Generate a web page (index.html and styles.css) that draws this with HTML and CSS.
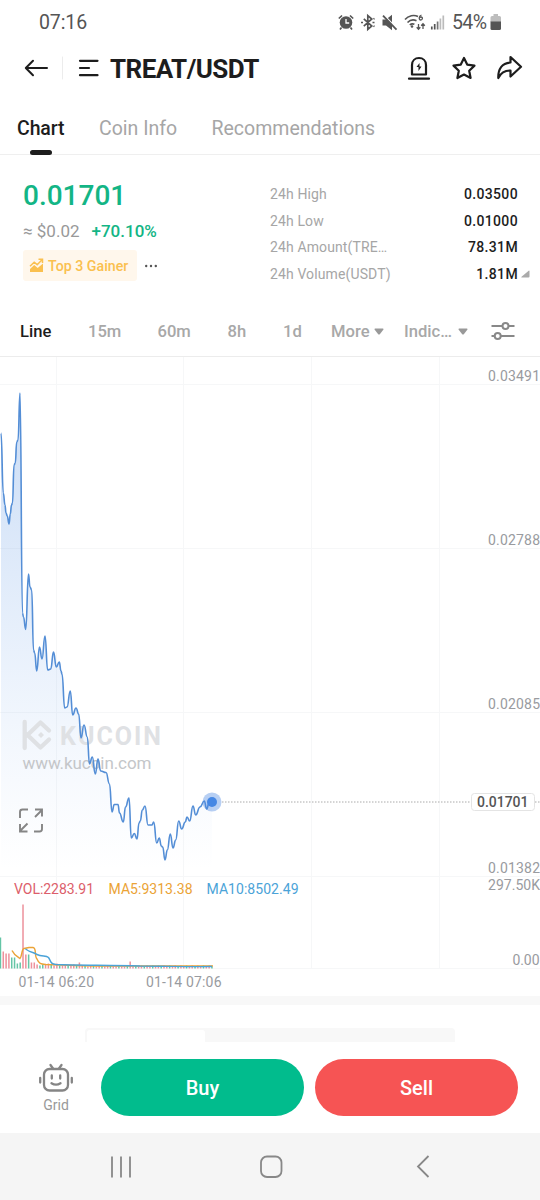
FILE: index.html
```html
<!DOCTYPE html>
<html lang="en">
<head>
<meta charset="utf-8">
<title>TREAT/USDT</title>
<link rel="stylesheet" href="styles.css">
</head>
<body>
<div class="status">
  <span class="clock">07:16</span>
  <svg class="status-icons" width="112" height="24" viewBox="336 10 112 24" fill="none" stroke="#555" stroke-width="1.700">
    <circle cx="346" cy="22.500" r="6.300" fill="#555" stroke="none"/>
    <path d="M338.800 18.500l3.200-3M353.200 18.500l-3.200-3M341.500 27.500l-1.500 2M350.500 27.500l1.500 2"/>
    <path d="M346 19v4h3.200" stroke="#fff" stroke-width="1.300"/>
    <path d="M363.800 18.800l8 7.200-4 3.500V15.500l4 3.500-8 7.200M361 22.500h2M372.500 22.500h2M373.500 19l1-.6M373.500 26l1 .6"/>
    <path d="M382.500 19.500v6h3.500l6 4.700V14.800l-6 4.700z" fill="#555" stroke="none"/>
    <path d="M384 15L398 29.500" stroke="#fff" stroke-width="1.300"/>
    <path d="M383 15.700L396.500 29.700" stroke-width="1.800"/>
    <path d="M405 19.500c3.500-4 9-5 13-3M407.500 22.500c2.500-2.600 6-3.200 9-1.800M409.800 25c1.300-1.200 3-1.400 4.600-.7" stroke-width="1.600"/>
    <circle cx="412" cy="26.500" r="1.300" fill="#555" stroke="none"/>
    <path d="M418.500 24v5M416.700 27.200l1.800 2 1.800-2M423 29v-5M421.200 25.800l1.800-2 1.800 2" stroke-width="1.300"/>
    <path d="M421.500 15c-3 1-2.800 5-.8 5s2.400-3 .3-3c-1 0-1.700.8-1.800 1.500" stroke-width="1.300"/>
    <path d="M431.800 26.500V29.500M434.700 24V29.500"/>
    <path d="M437.600 21.500V29.500" stroke="#777"/>
    <path d="M440.400 18.500V29.500M443.300 15.500V29.500" stroke="#bbb"/>
  </svg>
  <span class="battery-text">54%</span>
  <svg class="battery" width="12" height="18" viewBox="0 0 12 18"><path d="M3.500 1h4.500v2h1.500q1.500 0 1.500 1.500V9H.5V4.500Q.5 3 2 3h1.500z" fill="#bdbdbd"/><path d="M.5 8.500H11v7q0 1.500-1.500 1.500H2Q.5 17 .5 15.500z" fill="#555"/></svg>
</div>

<header class="header">
  <svg width="80" height="32" viewBox="22 52 80 32" fill="none" stroke="#1d1d1d" stroke-width="2" stroke-linecap="round" stroke-linejoin="round">
    <path d="M47 68H26M33 60.800L25.800 68l7.200 7.200"/>
    <path d="M62.500 57V79" stroke="#ececec" stroke-width="1"/>
    <path d="M80 60.800H97.500M80 68h9M80 75.200H97.500" stroke-width="2.200"/>
  </svg>
  <h1 class="pair">TREAT/USDT</h1>
  <svg class="header-actions" width="118" height="32" viewBox="406 52 118 32" fill="none" stroke="#1d1d1d" stroke-width="2.200" stroke-linecap="round" stroke-linejoin="round">
    <path d="M412 74.500V65c0-4.200 3-7 7-7s7 2.800 7 7v9.500zM409 78.700h20"/>
    <path d="M419.500 63l-3 4h2v4l3-4.500h-2z" fill="#1d1d1d" stroke="none"/>
    <path d="M464 58l3.200 6.600 7.300 1-5.300 5.100 1.400 7.300-6.600-3.500-6.600 3.500 1.400-7.300-5.300-5.100 7.300-1z"/>
    <path d="M510.500 57l10.500 9.800-10.500 9.700v-6c-5.500-.2-9.500 2-12.200 7.500-.3-9 3.700-15 12.200-15.500z"/>
  </svg>
</header>

<nav class="tabs">
  <span class="tab tab-active">Chart</span>
  <span class="tab tab-info">Coin Info</span>
  <span class="tab tab-rec">Recommendations</span>
</nav>

<section class="summary">
  <div class="quote">
    <div class="price">0.01701</div>
    <div class="change"><span>≈ $0.02</span><span class="gain">+70.10%</span></div>
    <div class="badges">
      <span class="badge">
        <svg width="15" height="15" viewBox="0 0 15 15"><path d="M1 14V11l4.200-4 3.500 3L14 5.500V14z" fill="#fac04f"/><path d="M1 8.200l4.200-4 3 2.500L13 1.800M9.500 1.300H13.500V5" fill="none" stroke="#fac04f" stroke-width="1.500"/></svg>
        <span class="badge-text">Top 3 Gainer</span>
      </span>
      <svg width="14" height="4" viewBox="0 0 14 4" fill="#555"><circle cx="2.200" cy="2" r="1.200"/><circle cx="7" cy="2" r="1.200"/><circle cx="11.800" cy="2" r="1.200"/></svg>
    </div>
  </div>
  <dl class="stats">
    <div class="stat"><dt>24h High</dt><dd>0.03500</dd></div>
    <div class="stat"><dt>24h Low</dt><dd>0.01000</dd></div>
    <div class="stat"><dt>24h Amount(TRE…</dt><dd>78.31M</dd></div>
    <div class="stat"><dt>24h Volume(USDT)</dt><dd>1.81M</dd></div>
  </dl>
  <svg class="expand" width="9" height="8" viewBox="0 0 9 8"><path d="M8 .5q.5 0 .5.500V6.500q0 1-1 1H.5q-.5-.3 0-.8z" fill="#aaa"/></svg>
</section>

<nav class="intervals">
  <span class="interval interval-active">Line</span>
  <span class="interval minutes">15m</span>
  <span class="interval hour">60m</span>
  <span class="interval hours">8h</span>
  <span class="interval day">1d</span>
  <span class="interval more">More<svg class="caret" width="10" height="7" viewBox="0 0 10 7"><path d="M1 .5h8q.8.500.3 1.200L6 6q-1 1-2 0L.7 1.700Q.2 1 1 .5z" fill="#999"/></svg></span>
  <span class="interval indicators">Indic…<svg class="caret" width="10" height="7" viewBox="0 0 10 7"><path d="M1 .5h8q.8.500.3 1.200L6 6q-1 1-2 0L.7 1.700Q.2 1 1 .5z" fill="#999"/></svg></span>
  <svg width="26" height="20" viewBox="0 0 26 20" fill="none" stroke="#888" stroke-width="2"><path d="M1.500 5H12M19 5H24.500M1.500 15H4.500M11 15H24.500"/><circle cx="15.500" cy="5" r="3"/><circle cx="7.700" cy="15" r="3"/></svg>
</nav>

<svg class="chart" width="540" height="640" viewBox="0 356 540 640">
  <defs>
    <linearGradient id="area" gradientUnits="userSpaceOnUse" x1="0" y1="393" x2="0" y2="870">
      <stop offset="0" stop-color="#5b93e0" stop-opacity=".33"/>
      <stop offset=".55" stop-color="#6fa3ea" stop-opacity=".15"/>
      <stop offset="1" stop-color="#8bb5f0" stop-opacity="0"/>
    </linearGradient>
  </defs>
  <path d="M0 356.500H540" stroke="#ececec"/>
  <path class="grid" d="M0 384.500H540M0 548.500H540M0 712.500H540M0 876.500H540M0 968.500H540M56.500 357V968M183.500 357V968M311.500 357V968M439.500 357V968"/>
  <path id="fill" fill="url(#area)"/>
  <g class="watermark">
    <path d="M24.700 722v26M27 735.500L40.500 722.500l8.500 8M27 734.500L40.500 747.500l8.500-8" fill="none" stroke="#dfe1e4" stroke-width="4.300" stroke-linejoin="round" stroke-linecap="round"/>
    <path d="M41 732l3 3-3 3-3-3z"/>
    <text class="brand" x="60" y="744.500" textLength="101">KUCOIN</text>
    <text class="site" x="22.500" y="768.500" textLength="129">www.kucoin.com</text>
  </g>
  <path id="line" class="line"/>
  <path d="M222 802H471M535 802H540" stroke="#aaa" stroke-width="1" stroke-dasharray="1.500 1.500"/>
  <circle cx="212" cy="802" r="9.500" fill="#4a86e0" fill-opacity=".4"/>
  <circle cx="212" cy="802" r="5" fill="#4587e4"/>
  <rect x="471.500" y="793.500" width="63" height="17" rx="3" fill="#fff" stroke="#e4e4e4"/>
  <text class="current" x="477" y="807" textLength="51.500">0.01701</text>
  <path d="M20 818v-6q0-2.500 2.500-2.500H28M42 824v5q0 2.500-2.500 2.500H34M35 817l7-7M35 809.500h7v7M27.500 823.500l-7 7M20 824v7.500h7.500" fill="none" stroke="#858585" stroke-width="1.900"/>
  <g class="axis">
    <text x="488" y="381" textLength="52">0.03491</text>
    <text x="488" y="545" textLength="52">0.02788</text>
    <text x="488" y="709" textLength="52">0.02085</text>
    <text x="488" y="873" textLength="52">0.01382</text>
    <text x="488" y="890" textLength="52">297.50K</text>
    <text x="512.500" y="965" textLength="27">0.00</text>
    <text x="18.500" y="986.500" textLength="75.500">01-14 06:20</text>
    <text x="146" y="986.500" textLength="75.500">01-14 07:06</text>
  </g>
  <g class="legend">
    <text x="14" y="894" textLength="80" fill="#dc5e6b">VOL:2283.91</text>
    <text x="108.500" y="894" textLength="84" fill="#eba336">MA5:9313.38</text>
    <text x="206.500" y="894" textLength="92" fill="#4ba3d8">MA10:8502.49</text>
  </g>
  <g id="bars"></g>
  <path d="M12 950.500C14 955 18 957 20 958.500C22 957 21.500 949 24 948.500L29 947.500H33C37 948 34 956 37 959C39 964 41 964 46 964.500C60 965 80 966 110 966H213" fill="none" stroke="#eba336" stroke-width="1.400"/>
  <path d="M25.500 949C31 953 34 952 37 954.500C42 957 46 955 48.500 957.500C51 961 50 964 56 964.500C80 965.500 110 965 140 966C165 966 190 967 212 966.500" fill="none" stroke="#4ba3d8" stroke-width="1.400"/>
</svg>

<div class="divider"></div>
<section class="book"><div class="segment"><div class="segment-active"></div></div></section>

<footer class="trade">
  <div class="grid-bot">
    <svg width="36" height="30" viewBox="0 0 36 30" fill="none" stroke="#858585" stroke-width="2.300" stroke-linecap="round"><rect x="6" y="6" width="24" height="21.500" rx="5.500"/><path d="M15 5.500L12.500 2M21 5.500L23.500 2M2.200 15v4.500M33.800 15v4.500M13.800 12.500v3M22.200 12.500v3M13.500 20.200q4.500 3 9 0"/></svg>
    <span>Grid</span>
  </div>
  <button class="btn buy">Buy</button>
  <button class="btn sell">Sell</button>
</footer>

<nav class="system">
  <svg width="22" height="22" viewBox="0 0 22 22" stroke="#888" stroke-width="1.800"><path d="M2 .5v21M11 .5v21M20 .5v21"/></svg>
  <svg class="home" width="24" height="24" viewBox="0 0 24 24" fill="none" stroke="#888" stroke-width="1.800"><rect x="2" y="1.500" width="20.500" height="20.500" rx="6"/></svg>
  <svg width="14" height="24" viewBox="0 0 14 24" fill="none" stroke="#888" stroke-width="1.800"><path d="M12.500 1L2 11.500l10.500 10.500"/></svg>
</nav>
<script src="chart.js"></script>
</body>
</html>
```
FILE: styles.css
```css
* { box-sizing: border-box; margin: 0; padding: 0; }
body { width: 540px; height: 1200px; overflow: hidden; background: #fff; font-family: Roboto, "Liberation Sans", sans-serif; color: #1d1d1d; display: flex; flex-direction: column; }
svg { display: block; flex: none; }

.status { height: 44px; padding-left: 39px; display: flex; align-items: center; color: #555; font-size: 19.5px; }
.clock { flex: none; width: 297px; letter-spacing: -.1px; }
.battery-text { width: 38px; margin-left: 4px; padding-top: 1px; letter-spacing: -.6px; }

.header { height: 48px; padding-left: 22px; display: flex; align-items: center; }
.pair { margin-left: 8px; padding-top: 2px; width: 296px; font-size: 26px; font-weight: 700; letter-spacing: -.55px; white-space: nowrap; line-height: 32px; }

.tabs { height: 63px; padding: 23px 17px 0; display: flex; border-bottom: 1px solid #efefef; font-size: 19.5px; line-height: 28px; color: #a6a6a6; white-space: nowrap; }
.tab { height: 39px; }
.tab-active { width: 47px; margin-right: 35px; color: #1d1d1d; font-weight: 500; letter-spacing: -.1px; }
.tab-active::after { content: ""; display: block; width: 22px; height: 5px; margin: 7px auto 0; border-radius: 3px; background: #1d1d1d; }
.tab-info { width: 78px; margin-right: 34.5px; }

.summary { height: 151px; padding: 25px 0 0 23px; display: flex; align-items: flex-start; }
.quote { width: 247px; }
.price { font-size: 28px; font-weight: 500; line-height: 32px; color: #13b585; }
.change { margin-top: 7px; display: flex; gap: 12px; font-size: 17px; line-height: 24px; color: #999; }
.gain { color: #13b585; font-weight: 500; }
.badges { margin-top: 7px; display: flex; align-items: center; gap: 7px; }
.badge { width: 114px; height: 31px; padding-left: 6px; display: flex; align-items: center; gap: 4px; border-radius: 3px; background: #fff7ec; }
.badge-text { padding-top: 1px; font-size: 14.2px; font-weight: 500; color: #fac04f; white-space: nowrap; }
.stats { width: 248px; padding-top: 1px; font-size: 14px; line-height: 26.5px; }
.stat { display: flex; justify-content: space-between; }
.stat dt { color: #a6a6a6; letter-spacing: .12px; }
.stat dd { font-weight: 500; letter-spacing: .35px; }
.expand { margin: 90px 0 0 3px; }

.intervals { height: 50px; padding-left: 20px; display: flex; align-items: center; font-size: 16.6px; font-weight: 500; color: #a8a8a8; }
.interval { display: flex; align-items: center; }
.interval-active { width: 68px; color: #1d1d1d; }
.minutes { width: 69.5px; }
.hour { width: 70px; }
.hours { width: 55.5px; }
.day { width: 48px; }
.more { width: 73px; }
.indicators { width: 86px; }
.caret { margin-left: 4px; }
.indicators .caret { margin-left: 6px; }

.chart { font-family: Roboto, "Liberation Sans", sans-serif; }
.grid { stroke: #f6f7f8; stroke-width: 1; }
.line { fill: none; stroke: #548ed6; stroke-width: 1.6; stroke-linejoin: round; }
.watermark { fill: #dfe1e4; }
.brand { font-size: 25px; font-weight: 700; }
.site { font-size: 17px; fill: #c4c6c9; }
.axis { font-size: 14px; fill: #999ba0; }
.current { font-size: 14px; font-weight: 500; fill: #555; }
.legend { font-size: 14px; }

.divider { height: 9px; background: #f8f8f8; }
.book { height: 37px; padding: 23px 85px 0; }
.segment { height: 14px; padding: 2px 2px 0; border-radius: 4px 4px 0 0; background: #f8f8f8; }
.segment-active { width: 118px; height: 12px; border-radius: 3px 3px 0 0; background: #fff; }

.trade { height: 91px; padding: 17px 22px 0 38px; display: flex; }
.grid-bot { width: 36px; margin-right: 27px; padding-top: 4px; display: flex; flex-direction: column; align-items: center; font-size: 14px; line-height: 24px; color: #999; }
.btn { width: 203px; height: 57px; padding-top: 1px; border: 0; border-radius: 29px; color: #fff; font: 500 20px Roboto, "Liberation Sans", sans-serif; }
.buy { background: #01bc8d; margin-right: 11px; }
.sell { background: #f65454; }

.system { height: 67px; padding: 0 110px; display: flex; align-items: center; justify-content: space-between; background: #f5f5f5; }
.home { margin-right: 6px; }
```
FILE: chart.js
```js
// Price line points, in chart coordinates
const points = [
  [1,433],[3.3,493],[5,505],[6,513],[7.3,516],[9,524],[10.3,514],[11.5,505],[12.5,503],[14,465],[15.3,463],[16.7,442],[18,440],[20,393],
  [22.5,613],[23.5,617],[25.7,629.5],[28.5,574],[30,587],[31.7,590],[33.5,650],[34.7,653],[36.7,671],[39.5,647],[42,659],[45,636],
  [47.7,670],[50.7,669],[53.5,652],[56.3,667],[59.3,662],[61,671],[62,674],[64.7,708],[67,707],[70.3,691],[72.7,715],[76,708],
  [78.7,714],[81,738],[84,725],[87.3,737],[89.5,764],[92.3,757],[95.3,774],[98,759],[100.7,771],[106,772.5],[109.5,784],[112,812],
  [114.3,804.5],[118,804.5],[119.5,813],[123.3,822],[125.5,807],[129,798],[131.3,838],[134.3,833.5],[137,839],[139,823],[140.3,821],
  [142.3,810],[145,806],[148,825],[152,825],[153.7,822],[156.7,843],[159.3,838],[161.3,846],[162.7,847],[165,860],[167.3,850],
  [170.3,834],[173,848],[175.7,840],[178.7,821],[181.7,829],[185.3,822],[187,817],[189.7,821],[193,806],[195.7,815],[200,807],
  [204.3,801],[206.7,809],[209,803],[212,802]
];
let d = `M${points[0]}`;
for (let i = 1; i < points.length; i++) {
  const [x0, y0] = points[i - 1], [x1, y1] = points[i];
  const mid = (x0 + x1) / 2;
  d += `C${mid} ${y0} ${mid} ${y1} ${x1} ${y1}`;
}
document.getElementById("line").setAttribute("d", d);
document.getElementById("fill").setAttribute("d", d + "V876H1Z");

// Volume bars: height and direction (u = up, d = down)
const bars = ["31u","17d","15d","15d","11u","11u","5u","6u","64d","14d","14u","6d","6d","4d","3u"];
const small = [4,4,6,4,3,5,3,3,4,3,3,4,3,6,3,3,2,3,3,2,3,3,2,3,3,2,2,3,2,2,3,7,3,4,3,3,2];
for (let i = 0; bars.length < 76; i++) {
  bars.push((i === 31 ? 7 : i === 13 ? 6 : i > 31 ? 2 + i % 2 : Math.min(small[i % small.length], 5)) + (i % 3 ? "d" : "u"));
}
document.getElementById("bars").innerHTML = bars.map((b, i) => {
  const h = parseInt(b, 10);
  return `<rect x="${(i * 2.82 - 0.3).toFixed(2)}" y="${968.5 - h}" width="1.5" height="${h}" fill="${b.endsWith("u") ? "#64c5a6" : "#ed919c"}"/>`;
}).join("");
```
